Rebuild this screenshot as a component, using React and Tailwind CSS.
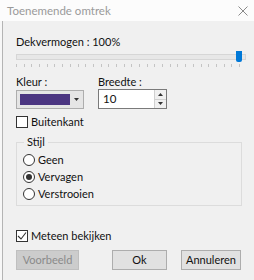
import React from "react";

const font = { fontFamily: 'Lato, "Open Sans", sans-serif' };

function Radio({ label, checked }) {
  return (
    <div className="flex items-center gap-[3px] h-[17px]">
      <span className="w-[12px] h-[12px] rounded-full border border-[#333] bg-white flex items-center justify-center shrink-0">
        {checked && <span className="w-[6px] h-[6px] rounded-full bg-[#333]" />}
      </span>
      <span>{label}</span>
    </div>
  );
}

function Check({ label, checked }) {
  return (
    <div className="flex items-center gap-[3px] h-[14px]">
      <span className="w-[12px] h-[12px] border border-[#333] bg-white flex items-center justify-center shrink-0">
        {checked && (
          <svg width="10" height="10" viewBox="0 0 10 10">
            <path d="M1 5 L4 8 L9 1.5" fill="none" stroke="#333" strokeWidth="1.1" />
          </svg>
        )}
      </span>
      <span>{label}</span>
    </div>
  );
}

export default function App() {
  const ticks = Array.from({ length: 30 });
  return (
    <div
      className="w-[254px] h-[280px] bg-[#f0f0f0] text-[11px] leading-[16px] text-[#111] flex flex-col overflow-hidden relative"
      style={font}
    >
      {/* Title bar */}
      <div className="h-[21px] bg-[#fcfcfc] flex items-center justify-between pl-[7px] pr-[6px] shrink-0">
        <span className="text-[#9a9a9a] text-[11.5px]">Toenemende omtrek</span>
        <svg width="10" height="10" viewBox="0 0 10 10">
          <path d="M0.5 0.5 L9.5 9.5 M9.5 0.5 L0.5 9.5" stroke="#8a8a8a" strokeWidth="1" />
        </svg>
      </div>

      <div className="flex flex-1">
        <div className="w-[3px] bg-[#f7f7f7] border-r border-[#b4b4b4] shrink-0" />
        <div className="flex-1 pl-[13px] pr-[8px] flex flex-col">
          {/* Opacity */}
          <div className="mt-[13px] h-[16px]">Dekvermogen : 100%</div>
          <div className="relative mt-[1px] h-[11px] flex items-center">
            <div className="w-full h-[6px] bg-[#e7e7e7] border border-[#d6d6d6]" />
            <div className="absolute right-[4px] top-0 w-[6px] h-[11px] bg-[#0078d7] rounded-b-[2px]" />
          </div>
          <div className="flex justify-between mt-[2px] h-[3px] pr-[6px]">
            {ticks.map((_, i) => (
              <span key={i} className="w-[1px] h-[3px] bg-[#c4c4c4]" />
            ))}
          </div>

          {/* Colour & width */}
          <div className="flex mt-[7px] gap-[14px]">
            <div className="flex flex-col">
              <span className="h-[16px]">Kleur :</span>
              <div className="w-[68px] h-[19px] bg-[#e5e5e5] border border-[#adadad] flex items-center pl-[3px]">
                <div className="w-[50px] h-[11px] bg-[#4b3581]" />
                <div className="flex-1 flex justify-center">
                  <svg width="5" height="3" viewBox="0 0 5 3">
                    <path d="M0 0 L5 0 L2.5 3 Z" fill="#333" />
                  </svg>
                </div>
              </div>
            </div>
            <div className="flex flex-col">
              <span className="h-[16px]">Breedte :</span>
              <div className="-mt-[1px] w-[69px] h-[20px] bg-white border border-[#7a7a7a] flex">
                <span className="flex-1 pl-[4px] leading-[18px] text-[11.5px]">10</span>
                <div className="w-[12px] flex flex-col border-l border-[#d0d0d0]">
                  <div className="flex-1 bg-[#f0f0f0] flex items-center justify-center border-b border-[#d0d0d0]">
                    <svg width="5" height="3" viewBox="0 0 5 3">
                      <path d="M0 3 L5 3 L2.5 0 Z" fill="#333" />
                    </svg>
                  </div>
                  <div className="flex-1 bg-[#f0f0f0] flex items-center justify-center">
                    <svg width="5" height="3" viewBox="0 0 5 3">
                      <path d="M0 0 L5 0 L2.5 3 Z" fill="#333" />
                    </svg>
                  </div>
                </div>
              </div>
            </div>
          </div>

          <div className="mt-[6px]">
            <Check label="Buitenkant" />
          </div>

          {/* Style group */}
          <div className="relative mt-[13px] w-[226px] h-[64px] border border-[#dcdcdc] pt-[8px] pl-[6px] flex flex-col">
            <span className="absolute -top-[9px] left-[7px] px-[3px] bg-[#f0f0f0]">Stijl</span>
            <Radio label="Geen" />
            <Radio label="Vervagen" checked />
            <Radio label="Verstrooien" />
          </div>

          <div className="mt-[23px]">
            <Check label="Meteen bekijken" checked />
          </div>

          {/* Buttons */}
          <div className="flex mt-[7px] h-[20px]">
            <button className="w-[63px] h-[20px] bg-[#cccccc] border border-[#bfbfbf] text-[#8a8a8a] leading-[18px]">
              Voorbeeld
            </button>
            <button className="ml-[33px] w-[55px] h-[20px] bg-[#e1e1e1] border border-[#adadad] leading-[18px]">
              Ok
            </button>
            <button className="ml-[14px] w-[60px] h-[20px] bg-[#e1e1e1] border border-[#adadad] leading-[18px]">
              Annuleren
            </button>
          </div>
        </div>
      </div>
    </div>
  );
}
